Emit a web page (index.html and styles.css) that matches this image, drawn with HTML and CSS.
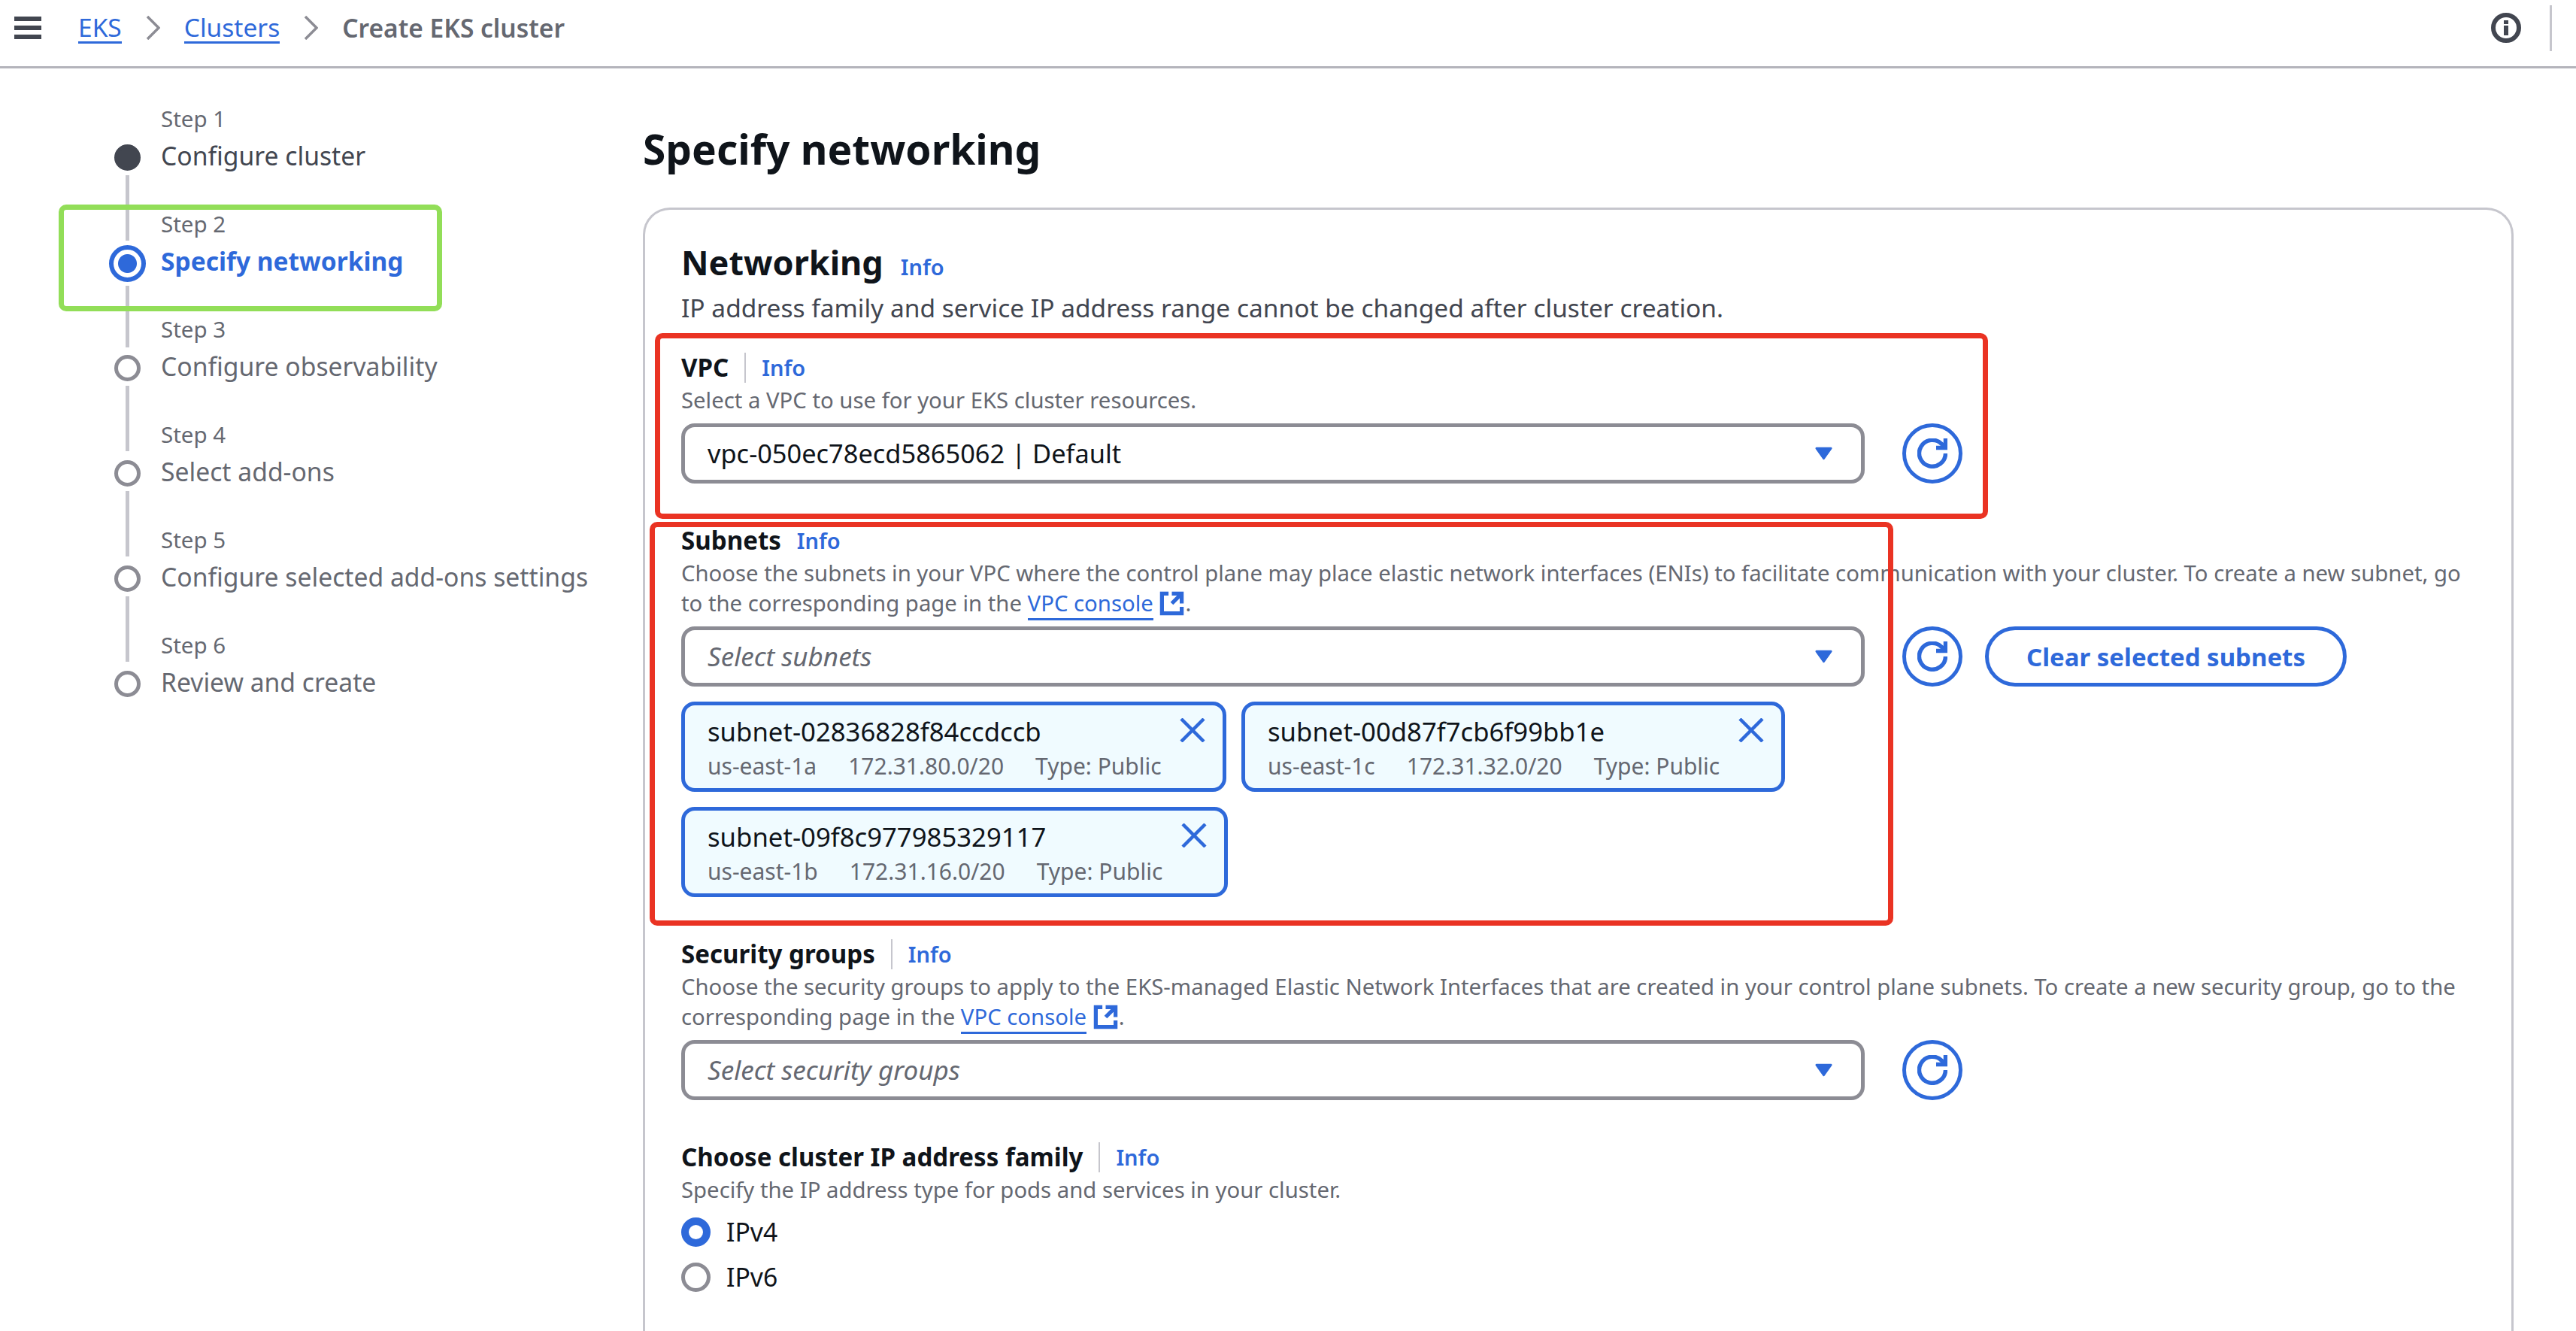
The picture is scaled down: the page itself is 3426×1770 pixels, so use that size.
FILE: index.html
```html
<!DOCTYPE html>
<html lang="en">
<head>
  <meta charset="UTF-8">
  <title>Create EKS cluster</title>
  <link rel="stylesheet" href="styles.css">
</head>
<body>
  <header class="topbar">
    <svg class="menu-icon" viewBox="0 0 36 30"><path d="M0 3h36M0 15h36M0 27h36"/></svg>
    <nav class="crumbs">
      <a href="#">EKS</a>
      <svg class="chevron" viewBox="0 0 19 32"><path d="M2 1l15 15L2 31"/></svg>
      <a href="#">Clusters</a>
      <svg class="chevron" viewBox="0 0 19 32"><path d="M2 1l15 15L2 31"/></svg>
      <span class="crumb-current">Create EKS cluster</span>
    </nav>
    <svg class="info-icon" viewBox="0 0 40 40"><circle cx="20" cy="20" r="17"/><path d="M20 17v13M20 10v5"/></svg>
    <div class="topbar-divider"></div>
  </header>

  <div class="layout">
    <ol class="steps">
      <li class="step done"><small>Step 1</small><span>Configure cluster</span></li>
      <li class="step current"><small>Step 2</small><span>Specify networking</span></li>
      <li class="step"><small>Step 3</small><span>Configure observability</span></li>
      <li class="step"><small>Step 4</small><span>Select add-ons</span></li>
      <li class="step"><small>Step 5</small><span>Configure selected add-ons settings</span></li>
      <li class="step last"><small>Step 6</small><span>Review and create</span></li>
    </ol>

    <main class="content">
      <h1>Specify networking</h1>
      <section class="panel">
        <div class="panel-head">
          <h2>Networking</h2>
          <a class="info" href="#">Info</a>
        </div>
        <p class="panel-desc">IP address family and service IP address range cannot be changed after cluster creation.</p>

        <div class="field field-vpc">
          <div class="label-row"><label>VPC</label><a class="info split" href="#">Info</a></div>
          <p class="hint">Select a VPC to use for your EKS cluster resources.</p>
          <div class="control-row">
            <div class="select">
              <span>vpc-050ec78ecd5865062 | Default</span>
              <svg class="caret" viewBox="0 0 26 20"><path d="M3 3h20L13 17z"/></svg>
            </div>
            <button class="refresh"><svg viewBox="0 0 16 16"><path d="M10 5h5V0"/><path d="M15 8a7 7 0 1 1-2-5l2 2"/></svg></button>
          </div>
        </div>

        <div class="field field-subnets">
          <div class="label-row"><label>Subnets</label><a class="info" href="#">Info</a></div>
          <p class="hint">Choose the subnets in your VPC where the control plane may place elastic network interfaces (ENIs) to facilitate communication with your cluster. To create a new subnet, go to the corresponding page in the <a class="link" href="#">VPC console</a> <svg class="ext" viewBox="0 0 16 16"><path d="M14 8V2H8M14 2L8 8M6 2H2v12h12v-4"/></svg>.</p>
          <div class="control-row">
            <div class="select placeholder">
              <span>Select subnets</span>
              <svg class="caret" viewBox="0 0 26 20"><path d="M3 3h20L13 17z"/></svg>
            </div>
            <button class="refresh"><svg viewBox="0 0 16 16"><path d="M10 5h5V0"/><path d="M15 8a7 7 0 1 1-2-5l2 2"/></svg></button>
            <button class="pill">Clear selected subnets</button>
          </div>
          <div class="tokens">
            <div class="token">
              <div class="token-name">subnet-02836828f84ccdccb</div>
              <div class="token-meta"><span>us-east-1a</span><span>172.31.80.0/20</span><span>Type: Public</span></div>
              <svg class="close" viewBox="0 0 34 32"><path d="M2 1l30 30M32 1L2 31"/></svg>
            </div>
            <div class="token">
              <div class="token-name">subnet-00d87f7cb6f99bb1e</div>
              <div class="token-meta"><span>us-east-1c</span><span>172.31.32.0/20</span><span>Type: Public</span></div>
              <svg class="close" viewBox="0 0 34 32"><path d="M2 1l30 30M32 1L2 31"/></svg>
            </div>
            <div class="token">
              <div class="token-name">subnet-09f8c977985329117</div>
              <div class="token-meta"><span>us-east-1b</span><span>172.31.16.0/20</span><span>Type: Public</span></div>
              <svg class="close" viewBox="0 0 34 32"><path d="M2 1l30 30M32 1L2 31"/></svg>
            </div>
          </div>
        </div>

        <div class="field field-sg">
          <div class="label-row"><label>Security groups</label><a class="info split" href="#">Info</a></div>
          <p class="hint">Choose the security groups to apply to the EKS-managed Elastic Network Interfaces that are created in your control plane subnets. To create a new security group, go to the corresponding page in the <a class="link" href="#">VPC console</a> <svg class="ext" viewBox="0 0 16 16"><path d="M14 8V2H8M14 2L8 8M6 2H2v12h12v-4"/></svg>.</p>
          <div class="control-row">
            <div class="select placeholder">
              <span>Select security groups</span>
              <svg class="caret" viewBox="0 0 26 20"><path d="M3 3h20L13 17z"/></svg>
            </div>
            <button class="refresh"><svg viewBox="0 0 16 16"><path d="M10 5h5V0"/><path d="M15 8a7 7 0 1 1-2-5l2 2"/></svg></button>
          </div>
        </div>

        <div class="field field-family">
          <div class="label-row"><label>Choose cluster IP address family</label><a class="info split" href="#">Info</a></div>
          <p class="hint">Specify the IP address type for pods and services in your cluster.</p>
          <div class="radio-row"><span class="radio checked"></span>IPv4</div>
          <div class="radio-row"><span class="radio"></span>IPv6</div>
        </div>
      </section>
    </main>
  </div>

  <!-- annotation boxes drawn on top of the screenshot -->
  <div class="mark mark-green"></div>
  <div class="mark mark-vpc"></div>
  <div class="mark mark-subnets"></div>
</body>
</html>
```

FILE: styles.css
```css
html, body {
  margin: 0;
  height: 1770px;
  overflow: hidden;
  background: #fff;
}
body {
  font-family: "Noto Sans", sans-serif;
  font-size: 33.7px;
  line-height: 40px;
  color: #0f141a;
}
a {
  color: #2e69da;
  text-decoration: none;
}
p, h1, h2, ol {
  margin: 0;
  padding: 0;
}
svg {
  fill: none;
  display: block;
}

.topbar {
  height: 91px;
  box-sizing: border-box;
  border-bottom: 3px solid #b4b4bb;
  display: flex;
  align-items: center;
  padding: 0 0 14px 19px;
}
.menu-icon {
  width: 36px;
  height: 30px;
  stroke: #424650;
  stroke-width: 6;
}
.crumbs {
  display: flex;
  align-items: center;
  margin-left: 49px;
  gap: 32px;
  flex: 1;
  font-size: 33.5px;
}
.crumbs a {
  border-bottom: 3px solid #2e69da;
  line-height: 38px;
}
.chevron {
  width: 19px;
  height: 32px;
  stroke: #8c8c94;
  stroke-width: 3.5;
}
.crumb-current {
  font-weight: 600;
  color: #656871;
}
.info-icon {
  width: 40px;
  height: 40px;
  stroke: #424650;
  stroke-width: 6;
  margin-right: 38px;
}
.topbar-divider {
  width: 3px;
  height: 61px;
  background: #c6c6cd;
  margin-right: 32px;
}

.layout {
  display: flex;
}

.steps {
  width: 855px;
  flex: none;
  list-style: none;
  padding-top: 47px;
  box-sizing: border-box;
}
.step {
  position: relative;
  height: 140px;
  padding-left: 214px;
  color: #656871;
}
.step small {
  display: block;
  font-size: 29.5px;
  line-height: 40px;
}
.step span {
  display: block;
  margin-top: 9px;
  white-space: nowrap;
}
.step::before {
  content: "";
  position: absolute;
  left: 152px;
  top: 54px;
  width: 35px;
  height: 35px;
  box-sizing: border-box;
  border: 5px solid #8c8c94;
  border-radius: 50%;
  background: #fff;
}
.step::after {
  content: "";
  position: absolute;
  left: 167px;
  top: 95px;
  width: 5px;
  height: 87px;
  background: #c6c6cd;
}
.step.last::after {
  display: none;
}
.step.done span {
  color: #424650;
}
.step.done::before {
  background: #424650;
  border-color: #424650;
}
.step.current span {
  color: #2e69da;
  font-weight: 700;
  font-size: 33.5px;
}
.step.current::before {
  left: 145px;
  top: 48px;
  width: 49px;
  height: 49px;
  border: 6px solid #2e69da;
  background: radial-gradient(circle, #2e69da 0 12px, #fff 13px);
}
.step.current::after {
  top: 102px;
  height: 82px;
}

.content {
  flex: 1;
  margin-right: 83px;
}
h1 {
  font-size: 55px;
  line-height: 60px;
  font-weight: 700;
  margin-top: 77px;
  margin-bottom: 48px;
}
.panel {
  border: 3px solid #c6c6cd;
  border-bottom: 0;
  border-radius: 36px 36px 0 0;
  padding: 45px 48px 0;
  height: 1500px;
  box-sizing: border-box;
}
.panel-head {
  display: flex;
  align-items: baseline;
  gap: 23px;
  height: 50px;
}
h2 {
  font-size: 45px;
  line-height: 50px;
  font-weight: 700;
}
.info {
  font-size: 29px;
  font-weight: 600;
}
.panel-desc {
  margin-top: 15px;
  font-size: 33.5px;
  color: #424650;
}

.field-vpc { margin-top: 40px; }
.field-subnets { margin-top: 56px; }
.field-sg { margin-top: 56px; }
.field-family { margin-top: 56px; }

.label-row {
  display: flex;
  align-items: center;
  height: 40px;
}
label {
  font-size: 33.1px;
  font-weight: 700;
}
.label-row .info {
  margin-left: 21px;
}
.label-row .split {
  border-left: 2px solid #c6c6cd;
  line-height: 40px;
  padding-left: 21px;
}
.hint {
  font-size: 29.3px;
  line-height: 40px;
  color: #656871;
  margin-top: 3px;
}
.link {
  border-bottom: 3px solid #2e69da;
}
.ext {
  display: inline-block;
  width: 35px;
  height: 35px;
  vertical-align: -7px;
  stroke: #2e69da;
  stroke-width: 2.4;
}

.control-row {
  display: flex;
  align-items: center;
  margin-top: 11px;
}
.select {
  width: 1574px;
  height: 80px;
  box-sizing: border-box;
  border: 5px solid #8c8c94;
  border-radius: 18px;
  padding: 0 37px 0 30px;
  font-size: 34.4px;
  display: flex;
  align-items: center;
  justify-content: space-between;
}
.select.placeholder {
  color: #656871;
  font-style: italic;
  font-size: 35px;
}
.caret {
  width: 25px;
  height: 20px;
  fill: #2e69da;
  stroke: #2e69da;
  stroke-width: 3;
  stroke-linejoin: round;
}
button {
  font-family: inherit;
  background: #fff;
  border: 5px solid #2e69da;
  color: #2e69da;
  padding: 0;
  height: 80px;
  box-sizing: border-box;
}
.refresh {
  width: 80px;
  border-radius: 50%;
  margin-left: 50px;
  display: flex;
  align-items: center;
  justify-content: center;
}
.refresh svg {
  width: 40px;
  height: 40px;
  stroke: #2e69da;
  stroke-width: 2.2;
}
.pill {
  width: 481px;
  margin-left: 30px;
  border-radius: 40px;
  font-size: 33px;
  font-weight: 700;
}

.tokens {
  display: flex;
  flex-wrap: wrap;
  gap: 20px 20px;
  margin-top: 20px;
  width: 1500px;
}
.token {
  position: relative;
  width: 725px;
  height: 120px;
  box-sizing: border-box;
  border: 5px solid #2e69da;
  border-radius: 18px;
  background: #f0fbff;
  padding: 15px 30px 0;
}
.token:nth-child(2) {
  width: 723px;
}
.token:nth-child(3) {
  width: 727px;
}
.token-name {
  font-size: 34.7px;
  line-height: 40px;
}
.token-meta {
  display: flex;
  gap: 42px;
  font-size: 30px;
  line-height: 40px;
  margin-top: 6px;
  color: #656871;
}
.close {
  position: absolute;
  right: 23px;
  top: 17px;
  width: 34px;
  height: 32px;
  stroke: #2e69da;
  stroke-width: 4.5;
}

.radio-row {
  display: flex;
  align-items: center;
  gap: 21px;
  height: 40px;
  margin-top: 20px;
}
.field-family .hint + .radio-row {
  margin-top: 16px;
}
.radio {
  width: 39px;
  height: 39px;
  box-sizing: border-box;
  border: 5px solid #8c8c94;
  border-radius: 50%;
}
.radio.checked {
  border: 10px solid #2e69da;
}

.mark {
  position: absolute;
  box-sizing: border-box;
  border-radius: 10px;
  border: 7px solid #ea3323;
}
.mark-green {
  left: 78px;
  top: 272px;
  width: 510px;
  height: 142px;
  border-color: #92de58;
}
.mark-vpc {
  left: 871px;
  top: 443px;
  width: 1773px;
  height: 247px;
}
.mark-subnets {
  left: 864px;
  top: 694px;
  width: 1654px;
  height: 537px;
}
```
